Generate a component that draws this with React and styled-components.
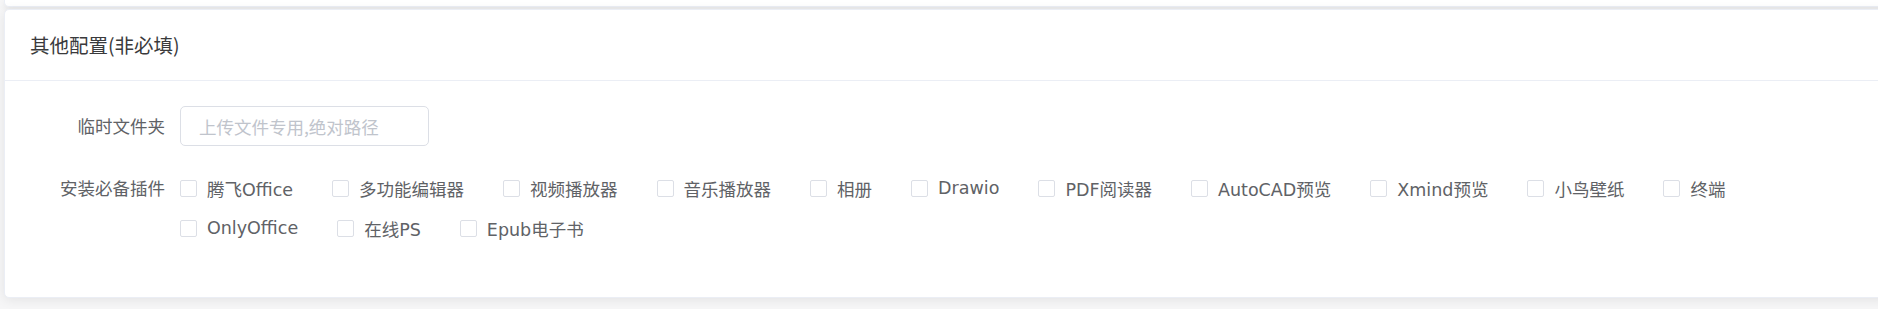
import React from "react";
import styled, { createGlobalStyle } from "styled-components";

const Global = createGlobalStyle`
  html, body { margin: 0; padding: 0; background: #f6f6f7; overflow: hidden; }
  body { font-family: "DejaVu Sans", "Noto Sans CJK SC", sans-serif; }
`;

const Page = styled.div`
  width: 1878px;
  height: 309px;
  overflow: hidden;
  display: flex;
  flex-direction: column;
  gap: 2px;
`;

const PrevCard = styled.div`
  height: 6px;
  margin-left: 4px;
  width: 1890px;
  background: #fff;
  border: 1px solid #ebeef5;
  border-top: none;
  border-radius: 0 0 5px 5px;
  box-shadow: 0 2px 6px rgba(0, 0, 0, 0.08);
`;

const Card = styled.section`
  margin-left: 4px;
  width: 1890px;
  background: #fff;
  border: 1px solid #ebeef5;
  border-radius: 5px;
  box-shadow: 0 2px 12px rgba(0, 0, 0, 0.08);
  box-sizing: border-box;
`;

const CardHeader = styled.header`
  padding: 22px 25px 22px 25px;
  border-bottom: 1px solid #ebeef5;
  font-family: "Noto Sans CJK SC", sans-serif;
  font-size: 19.5px;
  font-weight: 400;
  line-height: 26px;
  color: #3a3a3c;
`;

const CardBody = styled.div`
  padding: 25px 25px 27px 25px;
`;

const FormItem = styled.div`
  display: flex;
  align-items: flex-start;
  margin-bottom: 22px;
`;

const Label = styled.label`
  flex: 0 0 150px;
  box-sizing: border-box;
  padding-right: 15px;
  text-align: right;
  font-family: "Noto Sans CJK SC", sans-serif;
  font-size: 17.5px;
  line-height: 40px;
  color: #606266;
`;

const Input = styled.input`
  width: 249px;
  height: 40px;
  box-sizing: border-box;
  border: 1px solid #dcdfe6;
  border-radius: 5px;
  padding: 0 18px;
  font-family: "Noto Sans CJK SC", sans-serif;
  font-size: 17.5px;
  color: #606266;
  outline: none;
  &::placeholder { color: #c0c4cc; }
`;

const Group = styled.div`
  flex: 1;
  display: flex;
  flex-wrap: wrap;
  max-width: 1660px;
`;

const Item = styled.label`
  display: inline-flex;
  align-items: center;
  height: 40px;
  margin-right: 39px;
  font-size: 17.5px;
  color: #606266;
  cursor: pointer;
`;

const Box = styled.span`
  width: 17px;
  height: 17px;
  box-sizing: border-box;
  border: 1px solid #dcdfe6;
  border-radius: 2px;
  background: #fff;
  margin-right: 10px;
  flex: none;
`;

const plugins = [
  "腾飞Office", "多功能编辑器", "视频播放器", "音乐播放器", "相册", "Drawio",
  "PDF阅读器", "AutoCAD预览", "Xmind预览", "小鸟壁纸", "终端",
  "OnlyOffice", "在线PS", "Epub电子书",
];

export default function App() {
  return (
    <Page>
      <Global />
      <PrevCard />
      <Card>
        <CardHeader>其他配置(非必填)</CardHeader>
        <CardBody>
          <FormItem>
            <Label>临时文件夹</Label>
            <Input placeholder="上传文件专用,绝对路径" />
          </FormItem>
          <FormItem>
            <Label>安装必备插件</Label>
            <Group>
              {plugins.map((p) => (
                <Item key={p}>
                  <Box />
                  {p}
                </Item>
              ))}
            </Group>
          </FormItem>
        </CardBody>
      </Card>
    </Page>
  );
}
